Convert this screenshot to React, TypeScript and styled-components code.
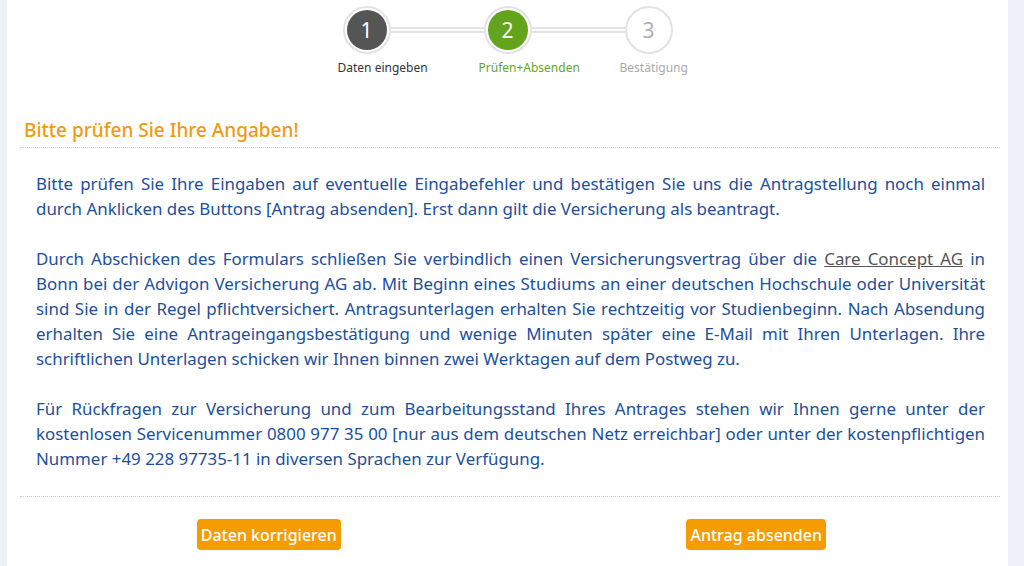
import React from 'react';
import styled, { createGlobalStyle } from 'styled-components';

const GlobalStyle = createGlobalStyle`
    html, body {
        margin: 0;
        padding: 0;
        background-color: #eef2f8;
    }
    body {
        font-family: 'Noto Sans', 'Open Sans', sans-serif;
    }
`;

// 단계 표시
const STEP_LIST = [
    { id: 's_01', num: 1, label: 'Daten eingeben', state: 'done' },
    { id: 's_02', num: 2, label: 'Prüfen+Absenden', state: 'active' },
    { id: 's_03', num: 3, label: 'Bestätigung', state: 'todo' },
] as const;

type StepState = 'done' | 'active' | 'todo';

const CIRCLE_BG: Record<StepState, string> = { done: '#555555', active: '#62a51c', todo: '#ffffff' };
const CIRCLE_FG: Record<StepState, string> = { done: '#ffffff', active: '#ffffff', todo: '#b0b0b0' };
const LABEL_FG: Record<StepState, string> = { done: '#333333', active: '#66a61e', todo: '#aaaaaa' };

const App = () => {
    return (
        <>
            <GlobalStyle />
            <PageDiv>
                <PanelDiv>
                    <StepperDiv>
                        {STEP_LIST.map((sData, idx) => (
                            <StepDiv key={sData.id} $last={idx === STEP_LIST.length - 1}>
                                <TrackDiv>
                                    <CircleDiv>
                                        <CircleInner $state={sData.state}>{sData.num}</CircleInner>
                                    </CircleDiv>
                                    {idx < STEP_LIST.length - 1 && <LineDiv />}
                                </TrackDiv>
                                <StepLabel $state={sData.state}>{sData.label}</StepLabel>
                            </StepDiv>
                        ))}
                    </StepperDiv>

                    <Heading>Bitte prüfen Sie Ihre Angaben!</Heading>

                    <TextDiv>
                        <Para>
                            Bitte prüfen Sie Ihre Eingaben auf eventuelle Eingabefehler und bestätigen Sie uns die
                            Antragstellung noch einmal durch Anklicken des Buttons [Antrag absenden]. Erst dann gilt
                            die Versicherung als beantragt.
                        </Para>
                        <Para>
                            Durch Abschicken des Formulars schließen Sie verbindlich einen Versicherungsvertrag über
                            die <LinkText href="#">Care Concept AG</LinkText> in Bonn bei der Advigon Versicherung AG
                            ab. Mit Beginn eines Studiums an einer deutschen Hochschule oder Universität sind Sie in
                            der Regel pflichtversichert. Antragsunterlagen erhalten Sie rechtzeitig vor Studienbeginn.
                            Nach Absendung erhalten Sie eine Antrageingangsbestätigung und wenige Minuten später eine
                            E-Mail mit Ihren Unterlagen. Ihre schriftlichen Unterlagen schicken wir Ihnen binnen zwei
                            Werktagen auf dem Postweg zu.
                        </Para>
                        <Para>
                            Für Rückfragen zur Versicherung und zum Bearbeitungsstand Ihres Antrages stehen wir Ihnen
                            gerne unter der kostenlosen Servicenummer 0800 977 35 00 [nur aus dem deutschen Netz
                            erreichbar] oder unter der kostenpflichtigen Nummer +49 228 97735-11 in diversen Sprachen
                            zur Verfügung.
                        </Para>
                    </TextDiv>

                    <ButtonRow>
                        <ButtonCell>
                            <OrangeButton type="button">Daten korrigieren</OrangeButton>
                        </ButtonCell>
                        <ButtonCell>
                            <OrangeButton type="button">Antrag absenden</OrangeButton>
                        </ButtonCell>
                    </ButtonRow>
                </PanelDiv>
            </PageDiv>
        </>
    );
};

const PageDiv = styled.div`
    display: flex;
    width: 1024px;
    height: 566px;
    overflow: hidden;
    background-color: #eef2f8;
`;

const PanelDiv = styled.div`
    display: flex;
    flex-direction: column;
    margin-left: 7px;
    width: 1001px;
    padding: 6px 8px 0 13px;
    box-sizing: border-box;
    background-color: #ffffff;
`;

const StepperDiv = styled.div`
    display: flex;
    justify-content: center;
    padding-right: 5px;
`;

const StepDiv = styled.div<{ $last: boolean }>`
    display: flex;
    flex-direction: column;
    width: ${(p) => (p.$last ? '48px' : '141px')};
`;

const TrackDiv = styled.div`
    display: flex;
    align-items: center;
    height: 48px;
`;

const CircleDiv = styled.div`
    flex: none;
    width: 48px;
    height: 48px;
    box-sizing: border-box;
    border-radius: 50%;
    border: 2px solid #e2e2e2;
    display: flex;
    align-items: center;
    justify-content: center;
    background-color: #ffffff;
`;

const CircleInner = styled.div<{ $state: StepState }>`
    width: 40px;
    height: 40px;
    border-radius: 50%;
    display: flex;
    align-items: center;
    justify-content: center;
    font-size: 21px;
    color: ${(p) => CIRCLE_FG[p.$state]};
    background-color: ${(p) => CIRCLE_BG[p.$state]};
`;

const LineDiv = styled.div`
    flex: 1;
    height: 6px;
    box-sizing: border-box;
    border-top: 2px solid #e2e2e2;
    border-bottom: 2px solid #e2e2e2;
    background-color: #ffffff;
`;

const StepLabel = styled.div<{ $state: StepState }>`
    margin-top: 6px;
    margin-left: -5px;
    white-space: nowrap;
    font-size: 12px;
    line-height: 16px;
    color: ${(p) => LABEL_FG[p.$state]};
`;

const Heading = styled.h2`
    margin: 42px 0 0 0;
    padding: 0 0 5px 4px;
    font-size: 19px;
    line-height: 24px;
    font-weight: 500;
    color: #f39a0c;
    border-bottom: 1px dotted #c4cde0;
`;

const TextDiv = styled.div`
    padding: 23px 15px 0 16px;
    border-bottom: 1px dotted #c4cde0;
`;

const Para = styled.p`
    margin: 0 0 25px 0;
    font-size: 16.9px;
    line-height: 25px;
    text-align: justify;
    color: #1c4f9c;
`;

const LinkText = styled.a`
    color: #555555;
    text-decoration: underline;
`;

const ButtonRow = styled.div`
    display: flex;
    padding: 22px 0 0 5px;
`;

const ButtonCell = styled.div`
    flex: 1;
    display: flex;
    justify-content: center;
`;

const OrangeButton = styled.button`
    height: 31px;
    padding: 0 4px;
    border: none;
    border-radius: 4px;
    background-color: #f59c00;
    color: #ffffff;
    font-family: 'Noto Sans', 'Open Sans', sans-serif;
    font-size: 16px;
    font-weight: 500;
    cursor: pointer;
`;

export default App;
